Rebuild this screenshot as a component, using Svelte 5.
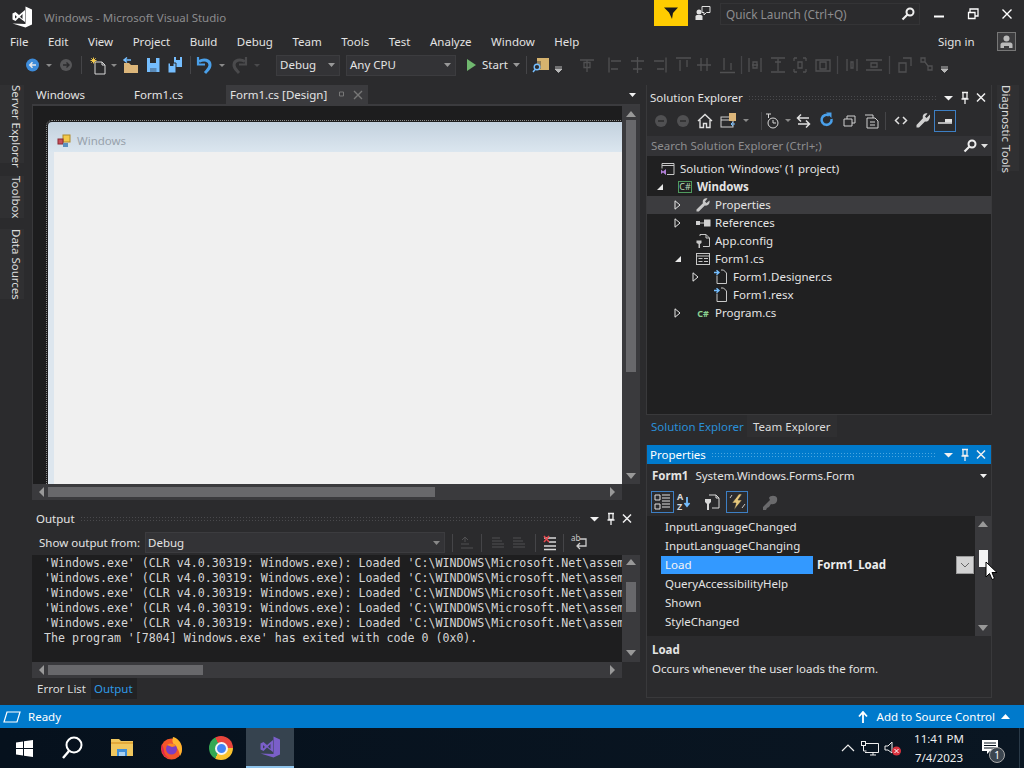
<script>
  const menus = ['File','Edit','View','Project','Build','Debug','Team','Tools','Test','Analyze','Window','Help'];
  const tree = [
    { level: 0, icon: 'sol', text: 'Solution \'Windows\' (1 project)' },
    { level: 1, arrow: 'open', icon: 'proj', text: 'Windows', bold: true },
    { level: 2, arrow: 'closed', icon: 'wrench', text: 'Properties', sel: true },
    { level: 2, arrow: 'closed', icon: 'refs', text: 'References' },
    { level: 2, icon: 'config', text: 'App.config' },
    { level: 2, arrow: 'open', icon: 'form', text: 'Form1.cs' },
    { level: 3, arrow: 'closed', icon: 'doc', text: 'Form1.Designer.cs' },
    { level: 3, icon: 'doc', text: 'Form1.resx' },
    { level: 2, arrow: 'closed', icon: 'cs', text: 'Program.cs' }
  ];
  const pad = (l) => (l === 0 ? 13 : 4 + (l - 1) * 18);
  const loaded = "'Windows.exe' (CLR v4.0.30319: Windows.exe): Loaded 'C:\\WINDOWS\\Microsoft.Net\\assem";
  const out = [loaded, loaded, loaded, loaded, loaded, "The program '[7804] Windows.exe' has exited with code 0 (0x0)."];
  const events = [
    { n: 'InputLanguageChanged' }, { n: 'InputLanguageChanging' },
    { n: 'Load', v: 'Form1_Load', sel: true },
    { n: 'QueryAccessibilityHelp' }, { n: 'Shown' }, { n: 'StyleChanged' }
  ];
</script>

{#snippet vslogo(c)}
  <svg width="20" height="22" viewBox="0 0 20 22"><path fill={c} fill-rule="evenodd" d="M13.5.5 20 3.5v15l-6.5 3-13-4 13 .5zM.5 7.5 3.5 6 7 9l6-5v12l-6-4.5L3.5 15 .5 13.5zM3 9v3.5L5 11zM10.5 8 8 10.8l2.5 2.2z"/></svg>
{/snippet}
{#snippet panelbtns()}
  <svg class="pbtns" width="48" height="14" viewBox="0 0 48 14" aria-hidden="true">
    <path d="M3 5h9l-4.500 4.500z" fill="#f1f1f1"/>
    <path d="M21 1.500h6M22 1.500v6h4v-6M20.500 8h7M24 8v5" stroke="#f1f1f1" fill="none" stroke-width="1.300"/>
    <path d="M36 2.500l8 8m0-8l-8 8" stroke="#f1f1f1" stroke-width="1.500"/>
  </svg>
{/snippet}
{#snippet grip()}<span class="grip"></span>{/snippet}
{#snippet tri(c)}
  <svg width="9" height="6" viewBox="0 0 9 6"><path d="M1 1h7L4.500 5z" fill={c}/></svg>
{/snippet}
{#snippet harrows(c)}
  <svg class="hleft" width="7" height="10" viewBox="0 0 7 10"><path d="M6 0v10L1 5z" fill={c}/></svg>
  <svg class="hright" width="7" height="10" viewBox="0 0 7 10"><path d="M1 0v10l5-5z" fill={c}/></svg>
{/snippet}
{#snippet treeicon(k)}
  <svg class="ti" width="16" height="16" viewBox="0 0 16 16">
    {#if k === 'sol'}
      <path d="M2 2.500h12v11H7M2 2.500v5M2 4.500h12" stroke="#c8c8c8" fill="none"/><path d="M1 8.500l2 2 3-2.500v6l-3-2.500-2 1.500z" fill="#b180d7"/>
    {:else if k === 'proj'}
      <rect x="1.500" y="2.500" width="13" height="11" fill="none" stroke="#4f9a5e"/><text x="8" y="11" text-anchor="middle" class="cstxt lite">C#</text>
    {:else if k === 'wrench'}
      <path d="M14.500 3.500 11.500 6 10 4.500l2.500-3c-2-.8-5 .5-4.800 3.500 0 .7.200 1 .200 1.300L1.500 12.500v2h2.300l6-6c2.500.8 5.500-1.500 4.700-5z" fill="#c8c8c8"/>
    {:else if k === 'refs'}
      <path d="M1 6h4v4H1zM9 4.500h6.500v7H9z" fill="#d0d0d0"/><path d="M5 8h4" stroke="#d0d0d0"/>
    {:else if k === 'config'}
      <path d="M5 3V1.500h6L14.500 5v8.500H8M11 1.500V5h3.500" stroke="#c8c8c8" fill="none"/><path d="M1.500 7.500h5v2.500L5 11v4H3.500v-4L1.500 10z" fill="#c8c8c8"/>
    {:else if k === 'form'}
      <rect x="1.500" y="2.500" width="13" height="11" fill="none" stroke="#c8c8c8"/><path d="M1.500 5h13M3.500 7.500h4M3.500 10.500h4M9 7.500h4M9 10.500h4" stroke="#c8c8c8"/>
    {:else if k === 'doc'}
      <path d="M4 6.500v8h9.500V4L10.500 1H8" stroke="#c8c8c8" fill="none"/><path d="M1 3.500h4M3.500 1.300 6 3.500 3.500 5.700" stroke="#75beff" fill="none" stroke-width="1.400"/>
    {:else if k === 'cs'}
      <text x="8" y="12" text-anchor="middle" class="cstxt">C#</text>
    {/if}
  </svg>
{/snippet}

<div class="app">
  <header class="titlebar">
    <div class="logo">{@render vslogo('#ffffff')}</div>
    <span class="wintitle">Windows - Microsoft Visual Studio</span>
    <div class="spacer"></div>
    <div class="filter">
      <svg width="14" height="14" viewBox="0 0 14 14"><path d="M0 1.500h14L9 7l-1 6-3-6.500z" fill="#1a1a1a"/></svg>
    </div>
    <svg class="feedback" width="16" height="16" viewBox="0 0 16 16"><path d="M7 1.500h8v6h-3.500L9 10V7.500H7z" fill="none" stroke="#e0e0e0"/><circle cx="4" cy="7" r="2.500" fill="#e0e0e0"/><path d="M0.500 15v-3.500c0-1 1-1.500 2-1.500h3c1 0 2 .5 2 1.500V15z" fill="#e0e0e0"/></svg>
    <div class="quick">
      <span>Quick Launch (Ctrl+Q)</span>
      <svg width="14" height="14" viewBox="0 0 14 14"><circle cx="9" cy="5" r="3.500" fill="none" stroke="#eee" stroke-width="2"/><path d="M6.500 7.500 1.500 12.500" stroke="#eee" stroke-width="2.200"/></svg>
    </div>
    <div class="winbtns">
      <svg width="34" height="14" viewBox="0 0 34 14"><path d="M12 9.500h10" stroke="#fff" stroke-width="2"/></svg>
      <svg width="34" height="14" viewBox="0 0 34 14"><path d="M14 5V2h8v7h-3M12.500 5.500h6.500v6h-6.500z" fill="none" stroke="#fff" stroke-width="1.300"/></svg>
      <svg width="34" height="14" viewBox="0 0 34 14"><path d="M12.500 2.500l9 9m0-9l-9 9" stroke="#fff" stroke-width="1.400"/></svg>
    </div>
  </header>

  <nav class="menubar">
    {#each menus as m}<span>{m}</span>{/each}
    <div class="spacer"></div>
    <span class="signin">Sign in</span>
    <div class="user">
      <svg width="19" height="19" viewBox="0 0 19 19"><rect x=".5" y=".5" width="18" height="18" fill="#3c3c3e" stroke="#777"/><circle cx="9.500" cy="6.500" r="3" fill="#bbb"/><path d="M3.500 16v-3.500c0-1 1-2 2-2h8c1 0 2 1 2 2V16H12v-2H7v2z" fill="#bbb"/></svg>
    </div>
  </nav>

  <div class="toolbar">
    <svg class="strip" width="240" height="26" viewBox="24 52 240 26">
      <circle cx="32.500" cy="65" r="6.500" fill="#3d8bd9"/><path d="M36 65h-6M32.500 62.300 29.800 65l2.700 2.700" stroke="#e8e8e8" stroke-width="1.500" fill="none"/>
      <path d="M46 64h6l-3 3z" fill="#8a8a8a"/>
      <circle cx="66" cy="65" r="6" fill="#565658"/><path d="M63 65h6M66.500 62.500 69 65l-2.500 2.500" stroke="#2b2b2d" stroke-width="1.400" fill="none"/>
      <path d="M81.500 56v18" stroke="#454548"/>
      <path d="M95 62h7l3 3v9h-10zM102 62v3h3" stroke="#d8d8d8" fill="none"/><path d="M93.500 57.500v6M90.500 60.500h6M91.300 58.300l4.400 4.400M95.700 58.300l-4.400 4.400" stroke="#f2c94c"/>
      <path d="M111 64h6l-3 3z" fill="#8a8a8a"/>
      <path d="M124 63h5l2 2h7v8h-14z" fill="#dcb67a"/><path d="M124 60h7M127 57.500 124 60l3 2.500" stroke="#75beff" fill="none" stroke-width="1.500"/>
      <path d="M147 58h12.500v14H147z" fill="#75beff"/><path d="M150 58h6v5h-6z" fill="#2b2b2d"/><path d="M150 68h6.500v4H150z" fill="#2b2b2d" opacity=".35"/>
      <path d="M174 57h8v10h-8z" fill="#75beff"/><path d="M176 57h4v3h-4z" fill="#2b2b2d"/><path d="M168 63h8v10h-8z" fill="#75beff" stroke="#2b2b2d"/><path d="M170 63h3.500v3H170z" fill="#2b2b2d"/>
      <path d="M190.500 56v18" stroke="#454548"/>
      <path d="M199 61.500c5-3 11-1.500 11 3.500 0 3.500-2.500 5-5 8" stroke="#4aa0ea" stroke-width="3" fill="none"/><path d="M198 57v7.500h7" stroke="#4aa0ea" stroke-width="2.200" fill="none"/>
      <path d="M219 64h6l-3 3z" fill="#8a8a8a"/>
      <path d="M245 61.500c-5-3-11-1.500-11 3.500 0 3.500 2.500 5 5 8" stroke="#4a4a4c" stroke-width="3" fill="none"/><path d="M246 57v7.500h-7" stroke="#4a4a4c" stroke-width="2.200" fill="none"/>
      <path d="M254 64h6l-3 3z" fill="#4a4a4c"/>
    </svg>
    <div class="combo debug"><span>Debug</span>{@render tri('#999')}</div>
    <div class="combo cpu"><span>Any CPU</span>{@render tri('#999')}</div>
    <svg class="play" width="11" height="14" viewBox="0 0 11 14"><path d="M1 1l9 6-9 6z" fill="#70b86f"/></svg>
    <span class="start">Start</span>
    <div class="startdd">{@render tri('#999')}</div>
    <svg class="strip2" width="430" height="26" viewBox="522 52 430 26">
      <path d="M526.500 56v18" stroke="#454548"/>
      <path d="M537 58h12v12h-12z" fill="#d6b36e"/><path d="M533 61h8v8h-8z" fill="#2b2b2d" opacity=".4"/><circle cx="537" cy="67" r="2.800" fill="#2b2b2d" stroke="#75beff" stroke-width="1.400"/><path d="M535 69.500l-2 2.500" stroke="#75beff" stroke-width="1.500"/>
      <path d="M555 69h7l-3.500 3.500zM555 67h7" stroke="#b8b8b8" fill="#b8b8b8"/>
      <g stroke="#505052" fill="none" stroke-width="1.300">
        <path d="M580 60h14M587 60v12M584 62.500h6v5h-6z"/>
        <path d="M609 57.500v15M611 61h10M611 69h7"/>
        <path d="M637.500 57v16M631 61h13M633 69h9"/>
        <path d="M666 57.500v15M654 61h10M657 69h7"/>
        <path d="M676 58h15M680 60v11M687 60v7"/>
        <path d="M697 65h14M701 58v13M707 58v13"/>
        <path d="M720 72.500h15M724 58v12M731 63v7"/>
        <path d="M741.500 56v18" stroke="#454548"/>
        <path d="M749 58v14M761 58v14M752 65h6M753 62h4v6h-4z"/>
        <path d="M771 58h14M771 72h14M778 59v12M775 62h6"/>
        <path d="M794 58h3M803 58h3M794 72h3M803 72h3M794 58v3M806 58v3M794 72v-3M806 72v-3M798 62h4v6h-4z"/>
        <path d="M816 60h14v11h-14zM820 62h6v7h-6z"/>
        <path d="M837.500 56v18" stroke="#454548"/>
        <path d="M847 59v12M857 59v12M851 62h2v6h-2z"/>
        <path d="M866 60h16M866 70h16M871 63h6v4h-6z"/>
        <path d="M889.500 56v18" stroke="#454548"/>
        <path d="M899 63h7v9h-7zM903 58h8v8"/>
        <path d="M921 58h4v4h-4zM928 66h4v4h-4zM925 62l3 4"/>
      </g>
      <path d="M941 69h7l-3.500 3.500zM941 67h7" stroke="#b8b8b8" fill="#b8b8b8"/>
    </svg>
  </div>

  <main class="main">
    <aside class="rail left">
      <span class="vtab sv">Server Explorer</span>
      <span class="vtab tb">Toolbox</span>
      <span class="vtab ds">Data Sources</span>
    </aside>

    <section class="doc">
      <div class="doctabs">
        <span class="dt win">Windows</span>
        <span class="dt f1">Form1.cs</span>
        <div class="dt active">
          <span>Form1.cs [Design]</span>
          <svg width="9" height="9" viewBox="0 0 9 9"><path d="M2.500 2h4v4h-4z" fill="none" stroke="#777"/></svg>
          <svg width="10" height="10" viewBox="0 0 10 10"><path d="M1 1l8 8m0-8l-8 8" stroke="#777" stroke-width="1.400"/></svg>
        </div>
        <div class="spacer"></div>
        <div class="tabdd">{@render tri('#f1f1f1')}</div>
      </div>
      <div class="docbody">
        <div class="designer">
          <div class="surface">
            <div class="formwin">
              <div class="formtitle">
                <svg width="14" height="14" viewBox="0 0 14 14"><rect x="6" y="1" width="7" height="7" fill="#f3c94b" stroke="#b08a2a"/><rect x="1" y="5" width="5" height="5" fill="#c8505a" stroke="#8a2b33"/><rect x="6" y="9" width="5" height="4" fill="#5b8fbd"/></svg>
                <span>Windows</span>
              </div>
              <div class="formbody"></div>
            </div>
          </div>
          <div class="vbar">
            <svg width="10" height="6" viewBox="0 0 10 6"><path d="M0 6 5 0l5 6z" fill="#999"/></svg>
            <div class="vthumb big"></div>
            <div class="spacer"></div>
            <svg width="10" height="6" viewBox="0 0 10 6"><path d="M0 0l5 6 5-6z" fill="#999"/></svg>
          </div>
        </div>
        <div class="hbar design">
          {@render harrows('#999')}
          <div class="hthumb t1"></div>
        </div>
      </div>

      <div class="output">
        <div class="ptitle out">
          <span>Output</span>
          {@render grip()}
          {@render panelbtns()}
        </div>
        <div class="outtools">
          <span class="from">Show output from:</span>
          <div class="combo outcombo"><span>Debug</span>{@render tri('#888')}</div>
          <svg class="outicons" width="150" height="20" viewBox="448 533 150 20">
            <path d="M452.500 534v18" stroke="#454548"/>
            <g stroke="#505052" fill="none"><path d="M461 548h12M461 544h8M465 537v5M462 540l3-3 3 3"/></g>
            <path d="M481.500 534v18" stroke="#454548"/>
            <g stroke="#505052" fill="none"><path d="M492 538h8M492 541h10M492 544h12M492 547h12"/><path d="M513 538h8M513 541h10M513 544h12M513 547h12"/></g>
            <path d="M535.500 534v18" stroke="#454548"/>
            <path d="M544 538h12M549 542h7M544 546h12M544 549.500h12" stroke="#d8d8d8" stroke-width="1.500"/><path d="M544 536l5 6m0-6l-5 6" stroke="#e5484d" stroke-width="1.500"/>
            <path d="M563.500 534v18" stroke="#454548"/>
            <text x="571" y="541" class="wrap">ab</text><path d="M580 539h6v7h-8M580 543l-3 3 3 3" stroke="#ccc" stroke-width="1.300" fill="none"/>
          </svg>
        </div>
        <div class="outmain">
          <pre class="log">{out.join('\n')}</pre>
          <div class="vbar outv">
            <svg width="10" height="6" viewBox="0 0 10 6"><path d="M0 6 5 0l5 6z" fill="#999"/></svg>
            <div class="vthumb small"></div>
            <div class="spacer"></div>
            <svg width="10" height="6" viewBox="0 0 10 6"><path d="M0 0l5 6 5-6z" fill="#999"/></svg>
          </div>
        </div>
        <div class="hbar outh">
          {@render harrows('#999')}
          <div class="hthumb t2"></div>
        </div>
      </div>
      <div class="btabs">
        <span class="bt err">Error List</span>
        <span class="bt on">Output</span>
      </div>
    </section>

    <section class="side">
      <div class="sol">
        <div class="ptitle">
          <span>Solution Explorer</span>
          {@render grip()}
          {@render panelbtns()}
        </div>
        <div class="soltools">
          <svg width="318" height="24" viewBox="650 110 318 24">
            <circle cx="661" cy="121" r="6" fill="#505052"/><path d="M664 121h-6" stroke="#2b2b2d" stroke-width="1.500"/>
            <circle cx="683" cy="121" r="6" fill="#505052"/><path d="M680 121h6" stroke="#2b2b2d" stroke-width="1.500"/>
            <path d="M698 121l7-6.500 7 6.500M700 120v7.500h3.500v-4h3v4h3.500v-7.500" stroke="#e0e0e0" stroke-width="1.400" fill="none"/>
            <rect x="721" y="117" width="12" height="10" fill="none" stroke="#d0d0d0"/><path d="M721 120h12" stroke="#d0d0d0"/><path d="M729 113h7v8h-7z" fill="#dcb67a"/><path d="M731 124h4M733 122l-2 2 2 2" stroke="#75beff" fill="none"/>
            <path d="M743 119h6l-3 3z" fill="#8a8a8a"/>
            <path d="M761.500 112v18" stroke="#454548"/>
            <circle cx="773" cy="123" r="5" fill="none" stroke="#d8d8d8"/><path d="M773 120v3h3" stroke="#d8d8d8" fill="none"/><path d="M766 114h5M768.500 114v4" stroke="#d8d8d8"/>
            <path d="M785 119h6l-3 3z" fill="#8a8a8a"/>
            <path d="M798 118h11M801 114.500 797.500 118l3.500 3.500M809 124h-11M806 120.500 809.500 124l-3.500 3.500" stroke="#e0e0e0" stroke-width="1.500" fill="none"/>
            <path d="M831.500 119a5 5 0 1 1-2.500-3.500" stroke="#4aa0ea" stroke-width="2.500" fill="none"/><path d="M826 112.500h5.500v5.500z" fill="#4aa0ea"/>
            <path d="M844 119h8v7h-8zM847 119v-3h8v7h-3" stroke="#d0d0d0" fill="none"/>
            <path d="M865 115h8v3M867 118h8l3 3v7h-11zM870 122h5M870 125h5" stroke="#d0d0d0" fill="none"/>
            <path d="M885.500 112v18" stroke="#454548"/>
            <path d="M899 117l-3.500 3.500L899 124M903 117l3.500 3.500L903 124" stroke="#e0e0e0" stroke-width="1.500" fill="none"/>
            <path d="M930 114.500 926.500 118 925 116.500l2.500-3c-2-.8-5 .5-4.800 3.500 0 .7.200 1 .200 1.300L916.500 125v2.500h2.500l6-6c2.500.8 5.500-1.500 5-7z" fill="#d0d0d0"/>
            <rect x="934.500" y="110.500" width="21" height="21" fill="none" stroke="#3d7fc4"/>
            <path d="M938 123h14" stroke="#e0e0e0" stroke-width="1.500"/><path d="M945 119h7v3.500h-7z" fill="#e0e0e0"/>
          </svg>
        </div>
        <div class="search">
          <span>Search Solution Explorer (Ctrl+;)</span>
          <svg width="14" height="14" viewBox="0 0 14 14"><circle cx="9" cy="5" r="3.500" fill="none" stroke="#eee" stroke-width="2"/><path d="M6.500 7.500 1.500 12.500" stroke="#eee" stroke-width="2.200"/></svg>
          {@render tri('#e0e0e0')}
        </div>
        <div class="tree">
          {#each tree as r}
            <div class="row" class:sel={r.sel} style="padding-left:{pad(r.level)}px">
              {#if r.level > 0}
                <span class="arrow">
                  {#if r.arrow === 'open'}
                    <svg width="8" height="8" viewBox="0 0 8 8"><path d="M7 1v6H1z" fill="#e8e8e8"/></svg>
                  {:else if r.arrow === 'closed'}
                    <svg width="7" height="10" viewBox="0 0 7 10"><path d="M1 .8v8.400L6 5z" fill="none" stroke="#e8e8e8"/></svg>
                  {/if}
                </span>
              {/if}
              <span class="icon">{@render treeicon(r.icon)}</span>
              <span class:bold={r.bold}>{r.text}</span>
            </div>
          {/each}
        </div>
      </div>
      <div class="soltabs">
        <span class="st on">Solution Explorer</span>
        <span class="st">Team Explorer</span>
      </div>
      <div class="props">
        <div class="ptitle blue">
          <span>Properties</span>
          {@render grip()}
          {@render panelbtns()}
        </div>
        <div class="propsel">
          <b>Form1</b><span>System.Windows.Forms.Form</span>
          <div class="spacer"></div>
          <svg width="7" height="5" viewBox="0 0 7 5"><path d="M0 0h7L3.500 4z" fill="#f1f1f1"/></svg>
        </div>
        <div class="proptools">
          <svg width="140" height="24" viewBox="648 490 140 24">
            <rect x="650.500" y="491.500" width="22" height="21" fill="none" stroke="#3d7fc4"/>
            <path d="M654 495h5v5h-5zM654 504h5v5h-5zM661 495h8M661 498h8M661 501h8M661 504h8M661 507h8" stroke="#e0e0e0" fill="none"/>
            <text x="676" y="500" class="azA">A</text><text x="676" y="510" class="azZ">Z</text><path d="M686 497v9M683.500 503l2.500 3 2.500-3" stroke="#75beff" stroke-width="1.800" fill="none"/>
            <path d="M708 495h7l3 3v10h-7M715 495v3h3" stroke="#d8d8d8" fill="none"/><path d="M704 499h6v3l-2 2v6h-2v-6l-2-2z" fill="#d8d8d8"/>
            <rect x="725.500" y="491.500" width="21" height="21" fill="none" stroke="#3d7fc4"/>
            <path d="M738 494l-7 9h4l-2 7 8-10h-4l4-6z" fill="#e6c77b" stroke="#2b2b2d" stroke-width=".6"/><path d="M731 495l-2 3M744 504l-3 4" stroke="#c8c8c8"/>
            <path d="M769 500l-4 4-3 3v3h3l1-2 2-1 2-3c4 1 7-2 6-6-1-3-7-3-8 0z" fill="#6a6a6c"/>
          </svg>
        </div>
        <div class="grid">
          <div class="evrows">
            {#each events as e}
              <div class="ev" class:sel={e.sel}>
                <span class="evname">{e.n}</span>
                {#if e.v}
                  <b class="evval">{e.v}</b>
                  <div class="spacer"></div>
                  <span class="evdd"><svg width="10" height="6" viewBox="0 0 10 6"><path d="M1 1l4 4 4-4" fill="none" stroke="#666"/></svg></span>
                {/if}
              </div>
            {/each}
          </div>
          <div class="pscroll">
            <svg width="10" height="6" viewBox="0 0 10 6"><path d="M0 6 5 0l5 6z" fill="#999"/></svg>
            <div class="pthumb"></div>
            <div class="spacer"></div>
            <svg width="10" height="6" viewBox="0 0 10 6"><path d="M0 0l5 6 5-6z" fill="#999"/></svg>
          </div>
          <svg class="cursor" width="14" height="20" viewBox="0 0 14 20"><path d="M1 1v15l3.500-3.500 2.500 6 2.500-1-2.500-6H12z" fill="#fff" stroke="#000"/></svg>
        </div>
        <div class="desc">
          <b>Load</b>
          <span>Occurs whenever the user loads the form.</span>
        </div>
      </div>
    </section>

    <aside class="rail right">
      <span class="vtab dg">Diagnostic Tools</span>
    </aside>
  </main>

  <footer class="status">
    <svg width="18" height="12" viewBox="0 0 18 12"><path d="M4 1h13l-3 10H1z" fill="none" stroke="#fff" stroke-width="1.200"/></svg>
    <span class="ready">Ready</span>
    <div class="spacer"></div>
    <svg width="10" height="12" viewBox="0 0 10 12"><path d="M5 12V2M1 5.500 5 1l4 4.500" stroke="#fff" stroke-width="1.800" fill="none"/></svg>
    <span class="addsrc">Add to Source Control</span>
    <svg width="9" height="5" viewBox="0 0 9 5"><path d="M0 5h9L4.500 0z" fill="#fff"/></svg>
  </footer>

  <div class="taskbar">
    <div class="tbi"><svg width="17" height="17" viewBox="0 0 17 17"><path d="M0 2.400 7 1.400v6.600H0zM8 1.200 17 0v8H8zM0 9h7v6.600l-7-1zM8 9h9v8l-9-1.200z" fill="#fff"/></svg></div>
    <div class="tbi m2"><svg width="22" height="24" viewBox="0 0 22 24"><circle cx="13" cy="9" r="7.500" fill="none" stroke="#fff" stroke-width="2"/><path d="M8 15 2 22" stroke="#fff" stroke-width="2.400"/></svg></div>
    <div class="tbi m2"><svg width="22" height="20" viewBox="0 0 22 20"><path d="M0 1h8l2 2h12v15H0z" fill="#f0c75e"/><path d="M0 4h22v2H0z" fill="#e2a93b"/><path d="M6 11h10v7H6z" fill="#3f8ed8"/><path d="M8 14h6v4H8z" fill="#aad0ef"/></svg></div>
    <div class="tbi m1"><svg width="24" height="24" viewBox="0 0 24 24"><circle cx="11.500" cy="13" r="10.500" fill="#f3552a"/><path d="M13 1c5 1 9 6 9 12 0 3-1 5-2 7-1-5-2-8-5-10-3-3-3-6-2-9z" fill="#ffb52e"/><path d="M2 8c-2 6 1 14 9 15-5-2-7-5-7-9z" fill="#e3244f"/><circle cx="11.500" cy="13" r="5.500" fill="#7b3fc4"/><path d="M7 9c3-2 7-2 9 1l-4 1z" fill="#ff8a1f"/></svg></div>
    <div class="tbi m1"><div class="chrome"><div class="cdot"></div></div></div>
    <div class="tbi vs">{@render vslogo('#7a5fc9')}</div>
    <div class="spacer"></div>
    <div class="tray">
      <svg width="14" height="8" viewBox="0 0 14 8"><path d="M1 7l6-6 6 6" stroke="#eee" fill="none" stroke-width="1.200"/></svg>
      <svg width="18" height="15" viewBox="0 0 18 15"><path d="M4 2.500h13.500v9H4M9 14h6M12 11.500V14" stroke="#eee" fill="none"/><rect x=".5" y=".5" width="4" height="4" fill="#06121e" stroke="#eee"/><path d="M2.500 5v5h3" stroke="#eee" fill="none"/></svg>
      <svg width="18" height="15" viewBox="0 0 18 15"><path d="M1 5h3l4-4v11L4 9H1z" fill="none" stroke="#eee"/><circle cx="12.500" cy="10" r="4.500" fill="#d9323e"/><path d="M10.500 8l4 4m0-4l-4 4" stroke="#fff"/></svg>
      <div class="clock"><span>11:41 PM</span><span>7/4/2023</span></div>
      <div class="notif">
        <svg width="16" height="15" viewBox="0 0 16 15"><path d="M0 0h16v11H8l-3 3v-3H0z" fill="#fff"/><path d="M2 3h12M2 5.500h12M2 8h12" stroke="#06121e"/></svg>
        <span class="badge">1</span>
      </div>
    </div>
  </div>
</div>

<style>
  :global(body) { margin: 0; background: #2b2b2d; }
  .app {
    width: 1024px; height: 768px; overflow: hidden; display: flex; flex-direction: column;
    background: #2b2b2d; color: #e4e4e4;
    font: 11.500px/16px "Noto Sans", "Open Sans", sans-serif;
  }
  .spacer { flex: 1; }
  svg { display: block; flex: none; }

  .titlebar { height: 30px; display: flex; align-items: flex-start; flex: none; }
  .logo { margin: 6px 0 0 12px; }
  .wintitle { margin: 10px 0 0 12px; color: #8b8b8d; }
  .filter { width: 34px; height: 26px; background: #ffcc00; display: flex; align-items: center; justify-content: center; }
  .feedback { margin: 5px 0 0 7px; }
  .quick { margin: 3px 0 0 9px; width: 200px; height: 22px; box-sizing: border-box; display: flex; align-items: center; justify-content: space-between; padding: 0 4px 0 5px; border: 1px solid #343436; color: #8d8d8f; font-size: 11.800px; }
  .winbtns { display: flex; margin: 7px 0 0 2px; width: 102px; }

  .menubar { height: 22px; flex: none; display: flex; align-items: center; gap: 19.500px; padding: 1px 0 0 10px; box-sizing: border-box; color: #e2e2e2; }
  .signin { margin-right: 3px; }
  .user { margin-right: 8px; margin-top: -1px; }

  .toolbar { height: 26px; flex: none; display: flex; align-items: center; margin-bottom: 7px; padding-left: 24px; }
  .combo { height: 21px; box-sizing: border-box; display: flex; align-items: center; justify-content: space-between; padding: 0 3px; border: 1px solid #3c3c3f; background: #333336; }
  .debug { width: 64px; margin-left: 12px; }
  .cpu { width: 110px; margin-left: 6px; }
  .play { margin-left: 10px; }
  .start { margin-left: 5px; width: 30px; }
  .startdd { width: 11px; }
  .strip2 { margin-left: -1px; }

  .main { flex: 1; min-height: 0; display: flex; }
  .rail { flex: none; width: 32px; }
  .left { display: flex; flex-direction: column; align-items: flex-start; }
  .vtab { writing-mode: vertical-rl; display: block; color: #dcdcdc; line-height: 16px; width: 24px; background: #303032; box-sizing: border-box; white-space: nowrap; }
  .sv { height: 78px; margin-bottom: 13px; }
  .tb { height: 42px; margin-bottom: 11px; }
  .ds { height: 70px; }
  .right .vtab { margin-left: 5px; width: 22px; height: 86px; padding-right: 5px; }

  .doc { width: 608px; flex: none; display: flex; flex-direction: column; }
  .doctabs { height: 19px; display: flex; align-items: center; flex: none; }
  .dt { line-height: 21px; color: #e4e4e4; }
  .win { margin-left: 4px; width: 98px; }
  .f1 { width: 92px; }
  .active { width: 142px; height: 19px; box-sizing: border-box; background: #3b3b3e; display: flex; align-items: center; padding-left: 4px; }
  .active span { width: 107px; }
  .active svg:last-child { margin-left: 7px; }
  .tabdd { width: 15px; display: flex; justify-content: center; }

  .docbody { flex: none; height: 396px; border-top: 2px solid #3b3b3e; box-sizing: border-box; display: flex; flex-direction: column; }
  .designer { display: flex; height: 378px; flex: none; }
  .surface { width: 590px; background: #1d1d1e; padding: 14px 0 0 14px; box-sizing: border-box; border-left: 1px solid #39393b; overflow: hidden; }
  .formwin { margin-left: 1px; margin-top: 2px; height: 362px; width: 574px; outline: 1px dotted #8a8a8a; outline-offset: 1px; display: flex; flex-direction: column; border-radius: 4px 0 0 0; background: linear-gradient(180deg, #c3d1de 0, #dbe6ef 30px, #dde6ee 30px); }
  .formtitle { height: 30px; flex: none; display: flex; align-items: center; gap: 6px; padding: 7px 0 0 9px; color: #98a2ac; box-sizing: border-box; }
  .formbody { flex: 1; margin-left: 6px; background: #f0f0f0; }

  .vbar { width: 18px; box-sizing: border-box; background: #3a3a3d; display: flex; flex-direction: column; align-items: center; padding: 5px 0; }
  .vthumb { width: 10px; background: #68686b; margin-top: 3px; }
  .big { height: 252px; }

  .hbar { position: relative; height: 16px; flex: none; background: #3a3a3d; width: 590px; }
  .hleft { position: absolute; left: 6px; top: 3px; }
  .hright { position: absolute; right: 6px; top: 3px; }
  .hthumb { position: absolute; top: 3px; height: 10px; background: #68686b; }
  .t1 { left: 16px; width: 387px; }
  .t2 { left: 16px; width: 155px; }

  .output { flex: none; height: 168px; margin-top: 10px; display: flex; flex-direction: column; }
  .ptitle { height: 19px; flex: none; display: flex; align-items: center; padding-left: 4px; gap: 5px; color: #e4e4e4; }
  .grip { flex: 1; height: 5px; background-image: radial-gradient(#49494c 0.7px, transparent 0.8px); background-size: 3px 3px; }
  .pbtns { margin-right: 2px; }
  .ptitle.blue { background: #007acc; color: #fff; }
  .ptitle.blue .grip { background-image: radial-gradient(#4aa6e0 0.7px, transparent 0.8px); }
  .ptitle.out { height: 16px; padding-top: 1px; box-sizing: border-box; }
  .ptitle.out .pbtns { margin-right: 5px; }
  .outtools { height: 29px; flex: none; display: flex; align-items: center; padding: 4px 0 0 7px; box-sizing: border-box; }
  .from { width: 106px; white-space: nowrap; }
  .outcombo { width: 300px; padding-left: 2px; }
  .outicons { margin-left: 3px; }
  .outmain { flex: 1; min-height: 0; display: flex; }
  .log { margin: 0; width: 590px; overflow: hidden; box-sizing: border-box; padding: 1px 0 0 12px; background: #1e1e1f; font: 11.620px/15px "DejaVu Sans Mono", "Liberation Mono", monospace; color: #d6d6d6; white-space: pre; }
  .outv { padding: 4px 0 6px; }
  .small { height: 30px; margin-top: 16px; }
  .outv .small { margin-top: 17px; }
  .outh { width: 590px; }

  .btabs { height: 27px; flex: none; display: flex; align-items: flex-start; }
  .bt { line-height: 21px; height: 21px; padding: 0 5px; color: #dcdcdc; }
  .err { width: 59px; box-sizing: border-box; }
  .bt.on { color: #2f9ae6; background: #222224; padding: 0 3px; width: 46px; box-sizing: border-box; }

  .side { width: 346px; margin-left: 6px; flex: none; display: flex; flex-direction: column; }
  .sol { height: 330px; flex: none; display: flex; flex-direction: column; border: 1px solid #39393b; border-top: 0; box-sizing: border-box; padding-top: 3px; }
  .side .ptitle { padding-left: 3px; }
  .soltools { height: 29px; flex: none; padding: 3px 0 0 3px; box-sizing: border-box; }
  .search { height: 20px; flex: none; display: flex; align-items: center; background: #333336; color: #8d8d8f; padding: 0 2px 0 4px; }
  .search span { flex: 1; }
  .search svg:last-child { margin-left: 3px; }
  .tree { flex: 1; background: #202021; padding-top: 4px; }
  .row { height: 18px; display: flex; align-items: center; color: #e4e4e4; white-space: nowrap; }
  .row.sel { background: #3c3c3f; }
  .arrow { width: 26px; flex: none; display: flex; padding-left: 5px; box-sizing: border-box; }
  .icon { width: 20px; flex: none; display: flex; }
  .bold { font-weight: 700; }

  .soltabs { height: 22px; flex: none; display: flex; align-items: center; padding-left: 1px; margin-bottom: 8px; }
  .st { height: 22px; line-height: 23px; padding: 0 6px; color: #dcdcdc; white-space: nowrap; }
  .st.on { color: #2a8fd8; width: 100px; padding: 0 4px; box-sizing: border-box; }
  .st:not(.on) { background: #2f2f31; }

  .props { flex: 1; min-height: 0; display: flex; flex-direction: column; position: relative; border: 1px solid #39393b; border-top: 0; box-sizing: border-box; margin-bottom: 7px; }
  .propsel { height: 24px; flex: none; display: flex; align-items: center; gap: 7px; padding: 0 4px 0 5px; }
  .proptools { height: 27px; flex: none; display: flex; align-items: center; padding-left: 2px; }
  .grid { height: 120px; flex: none; display: flex; position: relative; background: #222223; margin-top: 1px; }
  .evrows { width: 328px; padding: 1px 0 0 14px; box-sizing: border-box; }
  .ev { height: 19px; display: flex; align-items: center; }
  .evname { padding-left: 4px; width: 152px; flex: none; box-sizing: border-box; line-height: 18px; }
  .ev.sel .evname { background: #3399ff; color: #f4f4f4; }
  .evval { margin-left: 4px; color: #eee; }
  .evdd { width: 18px; height: 18px; margin-right: 1px; background: #d2d2d2; display: flex; align-items: center; justify-content: center; border: 1px solid #999; box-sizing: border-box; }
  .pscroll { width: 16px; background: #3a3a3d; display: flex; flex-direction: column; align-items: center; padding: 5px 0; box-sizing: border-box; }
  .pthumb { width: 9px; height: 17px; background: #f4f4f4; margin-top: 23px; }
  .cursor { position: absolute; left: 338px; top: 45px; }
  .desc { flex: 1; display: flex; flex-direction: column; padding: 4px 5px 0; line-height: 19px; }

  .status { height: 23px; flex: none; display: flex; align-items: center; background: #007acc; color: #fff; padding: 0 14px 0 3px; }
  .ready { margin-left: 7px; }
  .addsrc { margin: 0 6px 0 9px; }

  .taskbar { height: 40px; flex: none; display: flex; align-items: center; background: linear-gradient(90deg, #06111d, #0a1622); color: #eee; }
  .tbi { width: 48px; height: 40px; display: flex; align-items: center; justify-content: center; box-sizing: border-box; flex: none; }
  .m2 { margin-right: 2px; }
  .m1 { margin-right: 1px; }
  .vs { background: #36434f; border-bottom: 2px solid #8fc4ec; }
  .chrome { width: 24px; height: 24px; border-radius: 50%; display: flex; align-items: center; justify-content: center; background: conic-gradient(#e8453c 0 90deg, #f9c22e 90deg 210deg, #34a853 210deg 330deg, #e8453c 330deg); }
  .cdot { width: 9px; height: 9px; border-radius: 50%; background: #4285f4; border: 2.500px solid #f4f4f4; }
  .tray { display: flex; align-items: center; height: 40px; gap: 5px; margin-right: 4px; border-right: 1px solid #2a3a48; }
  .tray > svg:first-child { margin-right: 1px; }
  .clock { display: flex; flex-direction: column; align-items: center; width: 58px; line-height: 19px; margin-left: 3px; }
  .notif { position: relative; width: 30px; height: 30px; margin: 0 7px 0 9px; padding-top: 7px; box-sizing: border-box; }
  .badge { position: absolute; left: 7px; top: 14px; width: 16px; height: 16px; border-radius: 50%; background: #3c4650; border: 1px solid #aaa; box-sizing: border-box; font-size: 10px; line-height: 14px; text-align: center; color: #fff; }

  :global(.cstxt) { font: 700 9px "Noto Sans", sans-serif; fill: #8ad08f; }
  :global(.cstxt.lite) { font-weight: 400; fill: #b5dab8; }
  :global(.wrap) { font: 8px "Noto Sans", sans-serif; fill: #ccc; }
  :global(.azA) { font: 700 9px "Noto Sans", sans-serif; fill: #d8d8d8; }
  :global(.azZ) { font: 700 9px "Noto Sans", sans-serif; fill: #d8d8d8; }
</style>
